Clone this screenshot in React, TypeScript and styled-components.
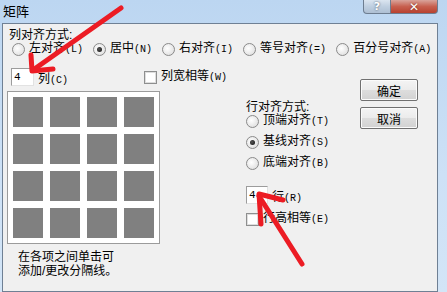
import { ReactNode } from "react";
import styled, { createGlobalStyle, css } from "styled-components";

const Global = createGlobalStyle`
  html, body { margin: 0; padding: 0; background: #fff; }
  body {
    font-family: "Liberation Sans", "Noto Sans CJK SC", sans-serif;
    font-size: 12px;
    color: #000;
  }
  * { box-sizing: border-box; }
`;

const Window = styled.div`
  position: relative;
  width: 447px;
  height: 292px;
  overflow: hidden;
  display: flex;
  flex-direction: column;
  padding: 0 9px 0 2px;
  background: linear-gradient(to bottom, #bcd6f1, #cde1f6 60%, #d3e5f7);
`;

const TitleBar = styled.div`
  height: 23px;
  display: flex;
  align-items: flex-start;
`;

const Title = styled.div`
  margin: 5px 0 0 1px;
  font-size: 13px;
  line-height: 14px;
`;

const CaptionButtons = styled.div`
  margin-left: auto;
  display: flex;
`;

const CaptionButton = styled.div<{ $close?: boolean }>`
  height: 14px;
  display: flex;
  align-items: center;
  justify-content: center;
  border: 1px solid #6d7d90;
  border-top: none;
  color: #fff;
  font-family: "DejaVu Sans", sans-serif;
  font-weight: 700;
  line-height: 12px;
  ${({ $close }) =>
    $close
      ? css`
          width: 47px;
          border-left: none;
          border-radius: 0 0 4px 0;
          font-size: 12px;
          background: linear-gradient(to bottom, #d9a49b, #c7604f 50%, #b8412f);
          text-shadow: 0 0 2px #6b1f14;
        `
      : css`
          width: 28px;
          border-radius: 0 0 0 4px;
          font-size: 11px;
          background: linear-gradient(to bottom, #dbe5f0, #bfcfe0 50%, #aebfd3);
          text-shadow: 0 0 2px #3d4a5a;
        `}
`;

const Client = styled.div`
  flex: 1;
  display: flex;
  flex-direction: column;
  padding: 5px 0 0 6px;
  background: #f0f0f0;
  border: 1px solid #6f8094;
`;

const GroupLabel = styled.div`
  line-height: 14px;
  height: 14px;
  margin-top: -1px;
`;

const RadioRow = styled.div`
  display: flex;
  align-items: center;
  gap: 10px;
  height: 14px;
  margin-left: 3px;
`;

const Option = styled.label`
  display: flex;
  align-items: center;
  gap: 4px;
  height: 14px;
  line-height: 14px;
  white-space: nowrap;
`;

const RadioDot = styled.span<{ $checked?: boolean }>`
  position: relative;
  width: 13px;
  height: 13px;
  flex: none;
  border-radius: 50%;
  border: 1px solid #8a8a8a;
  background: radial-gradient(circle at 40% 40%, #ffffff, #e4e4e4 70%, #d0d0d0);
  ${({ $checked }) =>
    $checked &&
    css`
      &::after {
        content: "";
        position: absolute;
        left: 3px;
        top: 3px;
        width: 5px;
        height: 5px;
        border-radius: 50%;
        background: radial-gradient(circle at 40% 40%, #555, #111);
      }
    `}
`;

const CheckBox = styled.span`
  width: 13px;
  height: 13px;
  flex: none;
  border: 1px solid #8e8f8f;
  background: #fff;
  box-shadow: inset 0 0 0 1px #dedede;
`;

const Key = styled.span`
  font-family: "Liberation Mono", monospace;
  font-size: 10px;
`;

const Body = styled.div`
  display: flex;
  margin-top: 12px;
`;

const LeftCol = styled.div`
  width: 237px;
  display: flex;
  flex-direction: column;
`;

const FieldRow = styled.div`
  display: flex;
  align-items: center;
  height: 18px;
  gap: 4px;
`;

const NumBox = styled.div<{ $w: number }>`
  width: ${({ $w }) => $w}px;
  height: 18px;
  padding-left: 2px;
  line-height: 16px;
  font-family: "Liberation Mono", monospace;
  font-size: 11px;
  background: #fff;
  border: 1px solid;
  border-color: #9c9c9c #e2e2e2 #e2e2e2 #9c9c9c;
`;

const Preview = styled.div`
  width: 153px;
  height: 153px;
  margin: 5px 0 0 -2px;
  padding: 5px;
  display: grid;
  grid-template-columns: repeat(4, 30px);
  grid-auto-rows: 30px;
  gap: 7px;
  background: #fff;
  border: 1px solid #9b9b9b;
`;

const Cell = styled.div`
  background: #808080;
`;

const Hint = styled.div`
  margin: 6px 0 0 9px;
  line-height: 14px;
`;

const MidCol = styled.div`
  display: flex;
  flex-direction: column;
  margin-top: 33px;
`;

const StackRows = styled.div`
  display: flex;
  flex-direction: column;
  gap: 7px;
`;

const RightCol = styled.div`
  margin: 11px 19px 0 auto;
  display: flex;
  flex-direction: column;
  gap: 6px;
`;

const PushButton = styled.div`
  width: 58px;
  height: 22px;
  display: flex;
  align-items: center;
  justify-content: center;
  border: 1px solid #707070;
  border-radius: 2px;
  background: linear-gradient(to bottom, #f4f4f4, #ebebeb 50%, #dddddd 51%, #d2d2d2);
  box-shadow: inset 0 0 0 1px #fbfbfb;
`;

const ArrowLayer = styled.svg`
  position: absolute;
  left: 0;
  top: 0;
  pointer-events: none;
`;

function Radio({ checked, children }: { checked?: boolean; children: ReactNode }) {
  return (
    <Option>
      <RadioDot $checked={checked} />
      <span>{children}</span>
    </Option>
  );
}

function Check({ children }: { children: ReactNode }) {
  return (
    <Option>
      <CheckBox />
      <span>{children}</span>
    </Option>
  );
}

const colAlign: [string, string, boolean][] = [
  ["左对齐", "(L)", false],
  ["居中", "(N)", true],
  ["右对齐", "(I)", false],
  ["等号对齐", "(=)", false],
  ["百分号对齐", "(A)", false],
];

const rowAlign: [string, string, boolean][] = [
  ["顶端对齐", "(T)", false],
  ["基线对齐", "(S)", true],
  ["底端对齐", "(B)", false],
];

export default function App() {
  return (
    <>
      <Global />
      <Window>
        <TitleBar>
          <Title>矩阵</Title>
          <CaptionButtons>
            <CaptionButton>?</CaptionButton>
            <CaptionButton $close>✕</CaptionButton>
          </CaptionButtons>
        </TitleBar>
        <Client>
          <GroupLabel>列对齐方式:</GroupLabel>
          <RadioRow>
            {colAlign.map(([t, k, c]) => (
              <Radio key={t} checked={c}>
                {t}
                <Key>{k}</Key>
              </Radio>
            ))}
          </RadioRow>
          <Body>
            <LeftCol>
              <FieldRow>
                <NumBox $w={23} style={{ marginLeft: 2 }}>4</NumBox>
                <span>
                  列<Key>(C)</Key>
                </span>
                <span style={{ width: 68 }} />
                <Check>
                  列宽相等<Key>(W)</Key>
                </Check>
              </FieldRow>
              <Preview>
                {Array.from({ length: 16 }, (_, i) => (
                  <Cell key={i} />
                ))}
              </Preview>
              <Hint>
                在各项之间单击可
                <br />
                添加/更改分隔线。
              </Hint>
            </LeftCol>
            <MidCol>
              <GroupLabel>行对齐方式:</GroupLabel>
              <StackRows>
                {rowAlign.map(([t, k, c]) => (
                  <Radio key={t} checked={c}>
                    {t}
                    <Key>{k}</Key>
                  </Radio>
                ))}
              </StackRows>
              <FieldRow style={{ marginTop: 16 }}>
                <NumBox $w={22}>4</NumBox>
                <span>
                  行<Key>(R)</Key>
                </span>
              </FieldRow>
              <div style={{ marginTop: 8 }}>
                <Check>
                  行高相等<Key>(E)</Key>
                </Check>
              </div>
            </MidCol>
            <RightCol>
              <PushButton>确定</PushButton>
              <PushButton>取消</PushButton>
            </RightCol>
          </Body>
        </Client>
        <ArrowLayer width="447" height="292" viewBox="0 0 447 292">
          <g stroke="#ec1c24" strokeWidth="5" strokeLinecap="round" strokeLinejoin="round" fill="none">
            <path d="M121 8 L33 70" />
            <path d="M31 55 L32 71 L53 69" />
            <path d="M302 264 L259 196" />
            <path d="M283 200 L259 194 L261 224" />
          </g>
        </ArrowLayer>
      </Window>
    </>
  );
}
